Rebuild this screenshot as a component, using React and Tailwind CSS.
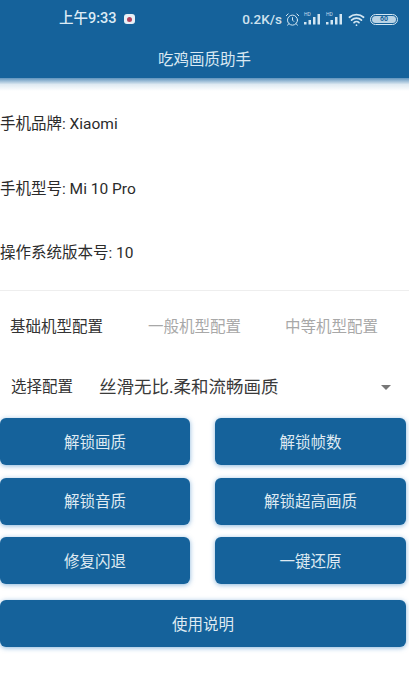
import { Wifi, AlarmClock } from "lucide-react";

const FONT = "[font-family:Roboto,'Noto_Sans_CJK_SC',sans-serif]";

const infoRows = [
  { label: "手机品牌: Xiaomi", h: "h-[65px]" },
  { label: "手机型号: Mi 10 Pro", h: "h-[65px]" },
  { label: "操作系统版本号: 10", h: "h-[64px]" },
];

function Signal({ tag }) {
  return (
    <div className="relative w-[17px] h-[12px]">
      <span className="absolute left-0 top-[-1px] text-[5px] leading-[5px] text-[#c4dcec]">{tag}</span>
      <svg width="17" height="12" viewBox="0 0 17 12" fill="#d3e6f2">
        <rect x="0" y="9" width="2.5" height="2.5" />
        <rect x="4.5" y="7" width="2.5" height="4.5" />
        <rect x="9" y="4" width="2.5" height="7.5" />
        <rect x="13.5" y="1" width="2.5" height="10.5" />
      </svg>
    </div>
  );
}

function Btn({ children }) {
  return (
    <button className="h-[47px] w-full rounded-[6px] bg-[#15629b] pt-[4px] text-[15.5px] text-[#dfeaf2] shadow-[0_1px_5px_rgba(40,120,190,0.55)]">
      {children}
    </button>
  );
}

export default function App() {
  return (
    <div className={`w-[409px] h-[675px] bg-white overflow-hidden ${FONT}`}>
      {/* header */}
      <div className="h-[78px] bg-[#15629b] flex flex-col">
        <div className="h-[38px] flex items-center justify-between pl-[59px] pr-[11px]">
          <div className="flex items-center gap-[7px]">
            <span className="text-[14.5px] font-medium text-[#dcebf5]">上午9:33</span>
            <span className="w-[11px] h-[10px] rounded-[3px] bg-[#e8f0f6] flex items-center justify-center">
              <span className="w-[5px] h-[5px] rounded-full bg-[#b0405c]" />
            </span>
          </div>
          <div className="flex items-center">
            <span className="text-[13.5px] font-medium text-[#cfe2ef] mr-[3px]">0.2K/s</span>
            <AlarmClock size={15} className="text-[#d3e6f2] mr-[4px]" strokeWidth={1.6} />
            <Signal tag="HD" />
            <div className="w-[5px]" />
            <Signal tag="HD" />
            <Wifi size={17} className="text-[#d3e6f2] mx-[5px]" strokeWidth={2.4} />
            <span className="w-[28px] h-[11px] rounded-full border border-[#d3e6f2] flex items-center justify-center p-[1px]">
              <span className="w-full h-full rounded-full bg-[#b9d3e5] text-[7px] leading-[7px] text-[#15629b] text-center font-bold">60</span>
            </span>
          </div>
        </div>
        <div className="flex-1 flex items-center justify-center pt-[6px]">
          <span className="text-[15.5px] text-[#d9e8f2]">吃鸡画质助手</span>
        </div>
      </div>
      <div className="h-[13px] bg-gradient-to-b from-[#5f94bd] via-[#dfeaf2] to-white" />

      {/* device info */}
      <div className="pt-[1px]">
        {infoRows.map(r => (
          <div key={r.label} className={`${r.h} flex items-center text-[15.5px] text-[#2b2b2b]`}>
            {r.label}
          </div>
        ))}
      </div>
      <div className="h-[1px] mt-[4px] bg-[#eeeeee]" />

      {/* tabs */}
      <div className="flex h-[73px] items-center text-[15.5px] pl-[10px]">
        <span className="w-[138px] text-[#333333]">基础机型配置</span>
        <span className="w-[137px] text-[#a8a8a8]">一般机型配置</span>
        <span className="text-[#a8a8a8]">中等机型配置</span>
      </div>

      {/* select */}
      <div className="flex items-center h-[46px] pl-[11px] pr-[18px] pt-[1px]">
        <span className="w-[88px] text-[15.5px] text-[#333333]">选择配置</span>
        <span className="flex-1 text-[17.5px] text-[#3a3a3a]">丝滑无比.柔和流畅画质</span>
        <span className="w-0 h-0 border-x-[5px] border-x-transparent border-t-[5px] border-t-[#777777]" />
      </div>

      {/* buttons */}
      <div className="grid grid-cols-[190px_191px] gap-x-[25px] gap-y-[12.5px] mt-[8px] w-[406px]">
        <Btn>解锁画质</Btn>
        <Btn>解锁帧数</Btn>
        <Btn>解锁音质</Btn>
        <Btn>解锁超高画质</Btn>
        <Btn>修复闪退</Btn>
        <Btn>一键还原</Btn>
        <div className="col-span-2 mt-[3.5px]">
          <Btn>使用说明</Btn>
        </div>
      </div>
    </div>
  );
}
